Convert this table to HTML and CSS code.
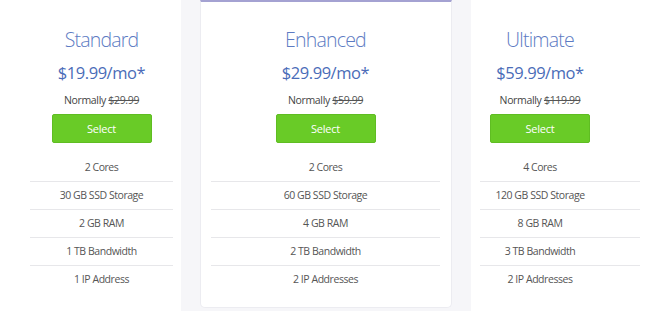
FILE: index.html
```html
<!DOCTYPE html>
<html lang="en">
<head>
<meta charset="utf-8">
<title>Plans</title>
<link rel="stylesheet" href="styles.css">
</head>
<body>
<div class="plans">
  <section class="card card-left">
    <div class="head">
      <h2 class="name">Standard</h2>
      <p class="price">$19.99/mo*</p>
      <p class="normal">Normally <s>$29.99</s></p>
      <button class="select">Select</button>
    </div>
    <ul class="features">
      <li>2 Cores</li>
      <li>30 GB SSD Storage</li>
      <li>2 GB RAM</li>
      <li>1 TB Bandwidth</li>
      <li>1 IP Address</li>
    </ul>
  </section>
  <section class="card card-mid">
    <div class="head">
      <h2 class="name">Enhanced</h2>
      <p class="price">$29.99/mo*</p>
      <p class="normal">Normally <s>$59.99</s></p>
      <button class="select">Select</button>
    </div>
    <ul class="features">
      <li>2 Cores</li>
      <li>60 GB SSD Storage</li>
      <li>4 GB RAM</li>
      <li>2 TB Bandwidth</li>
      <li>2 IP Addresses</li>
    </ul>
  </section>
  <section class="card card-right">
    <div class="head">
      <h2 class="name">Ultimate</h2>
      <p class="price">$59.99/mo*</p>
      <p class="normal">Normally <s>$119.99</s></p>
      <button class="select">Select</button>
    </div>
    <ul class="features">
      <li>4 Cores</li>
      <li>120 GB SSD Storage</li>
      <li>8 GB RAM</li>
      <li>3 TB Bandwidth</li>
      <li>2 IP Addresses</li>
    </ul>
  </section>
</div>
</body>
</html>
```
FILE: styles.css
```css
* { box-sizing: border-box; }
html, body { margin: 0; padding: 0; }
body {
  background: #f6f6f9;
  font-family: "Open Sans", "Noto Sans", sans-serif;
  color: #555;
  overflow: hidden;
  height: 311px;
}
.plans {
  display: flex;
  gap: 19px;
  height: 311px;
  align-items: stretch;
}
.card {
  background: #fff;
  padding-top: 28px;
  text-align: center;
}
.card-left {
  width: 181px;
  flex: none;
  padding-left: 30px;
  padding-right: 8px;
}
.card-mid {
  width: 252px;
  flex: none;
  align-self: flex-start;
  padding: 26px 11px 14px 10px;
  border: 1px solid #ececf1;
  border-top: 2px solid #a4a2d2;
  border-radius: 0 0 5px 5px;
}
.card-right {
  flex: 1;
  padding-left: 9px;
  padding-right: 10px;
}
.card-right .head,
.card-right .features li { padding-right: 40px; }
.head {
  display: flex;
  flex-direction: column;
  align-items: center;
}
.name {
  margin: 0;
  font-size: 19.5px;
  letter-spacing: -0.8px;
  line-height: 24px;
  font-weight: 300;
  color: #5d7bc3;
}
.price {
  margin: 10px 0 0;
  font-size: 16.5px;
  letter-spacing: -0.45px;
  line-height: 22px;
  font-weight: 400;
  color: #4a6cb8;
}
.normal {
  margin: 9px 0 0;
  font-size: 10.5px;
  letter-spacing: -0.33px;
  line-height: 15px;
  color: #444;
}
.normal s { color: #555; }
.select {
  margin-top: 6px;
  width: 100px;
  height: 29px;
  border: 1px solid #5fbd22;
  border-radius: 2px;
  background: #69cb27;
  color: #fff;
  font-family: inherit;
  font-size: 11px;
  letter-spacing: -0.2px;
  padding: 0;
}
.features {
  list-style: none;
  margin: 11px 0 0;
  padding: 0;
}
.features li {
  height: 28px;
  line-height: 27px;
  font-size: 10.5px;
  letter-spacing: -0.45px;
  color: #555;
  border-bottom: 1px solid #e7e7ea;
}
.features li:last-child { border-bottom: 0; height: 27px; }
```
